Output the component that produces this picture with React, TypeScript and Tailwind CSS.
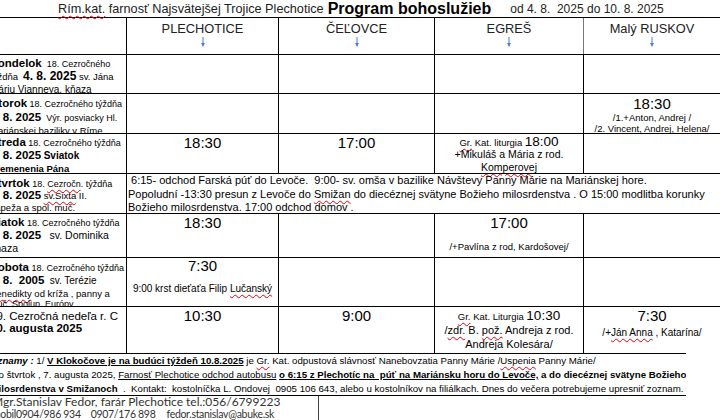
import type { ReactNode } from 'react'

const COLS = 'grid grid-cols-[126px_152px_156px_149px_1fr]'

// red spell-check squiggle
function W({ children }: { children: ReactNode }) {
  return <span className="underline decoration-wavy decoration-red-600 decoration-1 underline-offset-2">{children}</span>
}

function Arrow() {
  return (
    <svg width="6" height="10" viewBox="0 0 6 10" className="mx-auto mt-[1px] block">
      <line x1="3" y1="0" x2="3" y2="7" stroke="#4a7fd0" strokeWidth="1" />
      <polygon points="1,6 5,6 3,10" fill="#4a7fd0" />
    </svg>
  )
}

// one text line with a fixed height, so mixed font sizes don't push the rows apart
function Ln({ children, h = 'h-[13px]', className = '' }: { children: ReactNode; h?: string; className?: string }) {
  return <div className={`${h} leading-[13px] whitespace-nowrap ${className}`}>{children}</div>
}

// first column is cut off at the left edge of the page
function DayCell({ children }: { children: ReactNode }) {
  return (
    <div className="overflow-hidden pt-[2px]">
      <div className="-ml-[10px] text-[9px] text-black">{children}</div>
    </div>
  )
}

function Cell({ children, className = '' }: { children?: ReactNode; className?: string }) {
  return <div className={`border-l border-black text-center text-[9px] ${className}`}>{children}</div>
}

function Time({ t }: { t: string }) {
  return <div className="h-[18px] text-[15px] leading-[18px]">{t}</div>
}

const HEADS = ['PLECHOTICE', 'ČEĽOVCE', 'EGREŠ', 'Malý RUSKOV']

export default function App() {
  return (
    <div className="w-[720px] h-[420px] overflow-hidden bg-white text-black font-['Liberation_Sans',Arial,sans-serif]">
      {/* title */}
      <div className="h-[17px] flex items-end whitespace-nowrap">
        <span className="ml-[58px] text-[12.7px] leading-[15px] text-[#222]">
          <W>Rím.kat.</W> farnosť Najsvätejšej Trojice Plechotice
        </span>
        <span className="ml-[4px] text-[16px] leading-[17px] font-bold">Program bohoslužieb</span>
        <span className="ml-[19px] text-[12px] leading-[15px] text-[#222]">od 4. 8.&nbsp; 2025 do 10. 8. 2025</span>
      </div>

      {/* table */}
      <div className="border-t border-black">
        <div className={`${COLS} h-[37px] border-b border-black`}>
          <div />
          {HEADS.map((h, i) => (
            <div key={h} className={`border-l ${i === 3 ? 'border-[#777]' : 'border-black'} text-center pt-[3px]`}>
              <div className="text-[12.8px] leading-[15px] text-[#222]">{h}</div>
              <Arrow />
            </div>
          ))}
        </div>

        {/* Pondelok */}
        <div className={`${COLS} h-[39px] border-b border-black`}>
          <DayCell>
            <Ln>
              <b className="text-[11.5px]">Pondelok</b>&nbsp; 18. Cezročného
            </Ln>
            <Ln>
              <span className="text-[9.5px]">týždňa</span>&nbsp; <b className="text-[12px]">4. 8. 2025</b>{' '}
              <span className="text-[9.5px]">sv. Jána</span>
            </Ln>
            <Ln className="text-[10px]">
              Máriu <W>Vianneya</W>, kňaza
            </Ln>
          </DayCell>
          <Cell />
          <Cell />
          <Cell />
          <Cell className="border-[#777]" />
        </div>

        {/* Utorok */}
        <div className={`${COLS} h-[40px] border-b border-black`}>
          <DayCell>
            <Ln h="h-[14px]" className="mt-[1px]">
              <b className="text-[11.5px]">Utorok</b> 18. Cezročného týždňa
            </Ln>
            <Ln>
              <b className="text-[11.5px]">5. 8. 2025</b> <span className="text-[9px]">&nbsp;Výr. posviacky Hl.</span>
            </Ln>
            <Ln className="text-[9.5px]">Mariánskej baziliky v Ríme</Ln>
          </DayCell>
          <Cell />
          <Cell />
          <Cell />
          <Cell className="border-[#777] pt-[1px]">
            <div className="h-[17px] text-[15px] leading-[17px]">18:30</div>
            <div className="h-[11px] text-[9.5px] leading-[11px]">/1.+Anton, Andrej /</div>
            <div className="h-[11px] text-[9.5px] leading-[11px]">/2. Vincent, Andrej, Helena/</div>
          </Cell>
        </div>

        {/* Streda */}
        <div className={`${COLS} h-[40px] border-b border-black`}>
          <DayCell>
            <Ln>
              <b className="text-[11.5px]">Streda</b> 18. Cezročného týždňa
            </Ln>
            <Ln>
              <b className="text-[11.5px]">6. 8. 2025</b> <b className="text-[10px]">Sviatok</b>
            </Ln>
            <Ln className="text-[9.5px] font-bold">Premenenia Pána</Ln>
          </DayCell>
          <Cell>
            <Time t="18:30" />
          </Cell>
          <Cell>
            <Time t="17:00" />
          </Cell>
          <Cell className="pt-[1px]">
            <div className="h-[13px] leading-[13px] whitespace-nowrap">
              <span className="text-[9.5px]">
                <W>Gr.</W> Kat. liturgia
              </span>{' '}
              <span className="text-[13.5px]">18:00</span>
            </div>
            <div className="h-[12.5px] text-[10.5px] leading-[12.5px]">+Mikuláš a Mária z rod.</div>
            <div className="h-[12.5px] text-[10.5px] leading-[12.5px]">
              <W>Komperovej</W>
            </div>
          </Cell>
          <Cell className="border-[#777]" />
        </div>

        {/* Štvrtok */}
        <div className={`${COLS} h-[40px] border-b border-black`}>
          <DayCell>
            <Ln h="h-[12px]" className="mt-[1px]">
              <b className="text-[11.5px]">Štvrtok</b> 18. <W>Cezročn</W>. týždňa
            </Ln>
            <Ln h="h-[12px]">
              <b className="text-[11.5px]">7. 8. 2025</b>{' '}
              <span className="text-[9.5px]">
                <W>sv.Sixta</W> II.
              </span>
            </Ln>
            <Ln className="text-[9.5px]">pápeža a spol. muč.</Ln>
          </DayCell>
          <div className="col-span-4 border-l border-black pl-[1px] text-[11px] leading-[13.5px] whitespace-nowrap overflow-hidden">
            <div>&nbsp;6:15- odchod Farská púť do Levoče.&nbsp; 9:00- sv. omša v bazilike Návštevy Panny Márie na Mariánskej hore.</div>
            <div>
              Popoludní -13:30 presun z Levoče do <W>Smižan</W> do diecéznej svätyne Božieho milosrdenstva . O 15:00 modlitba korunky
            </div>
            <div>Božieho milosrdenstva. 17:00 odchod domov .</div>
          </div>
        </div>

        {/* Piatok */}
        <div className={`${COLS} h-[44px] border-b border-black`}>
          <DayCell>
            <Ln>
              <b className="text-[11.5px]">Piatok</b> 18. Cezročného týždňa
            </Ln>
            <Ln>
              <b className="text-[11.5px]">8. 8. 2025</b> <span className="text-[10.5px]">&nbsp; sv. Dominika</span>
            </Ln>
            <Ln className="text-[10.5px]">kňaza</Ln>
          </DayCell>
          <Cell>
            <Time t="18:30" />
          </Cell>
          <Cell />
          <Cell>
            <Time t="17:00" />
            <div className="h-[11px] text-[9.5px] leading-[11px] mt-[9px]">/+Pavlína z rod, Kardošovej/</div>
          </Cell>
          <Cell className="border-[#777]" />
        </div>

        {/* Sobota */}
        <div className={`${COLS} h-[49px] border-b border-black`}>
          <DayCell>
            <Ln className="mt-[1px]">
              <b className="text-[11.5px]">Sobota</b> 18. Cezročného týždňa
            </Ln>
            <Ln>
              <b className="text-[11.5px]">9. 8.&nbsp; 2005</b> <span className="text-[10px]">&nbsp;sv. Terézie</span>
            </Ln>
            <Ln h="h-[11px]" className="text-[9.5px]">
              <W>Benedikty</W> od kríža , panny a
            </Ln>
            <Ln h="h-[10px]" className="text-[9px]">
              muč. <W>Spolup.</W> Európy
            </Ln>
          </DayCell>
          <Cell>
            <div className="h-[16px] text-[15px] leading-[16px]">7:30</div>
            <div className="h-[12px] text-[10px] leading-[12px] mt-[9px]">
              9:00 krst dieťaťa Filip <W>Lučanský</W>
            </div>
          </Cell>
          <Cell />
          <Cell />
          <Cell className="border-[#777]" />
        </div>

        {/* Nedeľa */}
        <div className={`${COLS} h-[46px]`}>
          <DayCell>
            <Ln h="h-[12px]" className="text-[11.5px] mt-[1px]">
              19. Cezročná nedeľa r. C
            </Ln>
            <Ln h="h-[13px]" className="text-[11.5px] font-bold">
              10. augusta 2025
            </Ln>
          </DayCell>
          <Cell>
            <Time t="10:30" />
          </Cell>
          <Cell>
            <Time t="9:00" />
          </Cell>
          <Cell className="pt-[1px]">
            <div className="h-[15px] leading-[15px] whitespace-nowrap">
              <span className="text-[9.5px]">
                <W>Gr.</W> Kat. Liturgia
              </span>{' '}
              <span className="text-[13.5px]">10:30</span>
            </div>
            <div className="h-[14px] text-[11px] leading-[14px]">
              /<W>zdr.</W> B. <W>pož.</W> Andreja z rod.
            </div>
            <div className="h-[14px] text-[11px] leading-[14px]">Andreja Kolesára/</div>
          </Cell>
          <Cell className="border-[#777]">
            <Time t="7:30" />
            <div className="h-[12px] text-[10px] leading-[12px] mt-[2px]">
              /+<W>Ján Anna</W> , Katarína/
            </div>
          </Cell>
        </div>
      </div>

      {/* notes */}
      <div className="w-[686px] h-[43px] border-t border-b border-black overflow-hidden">
        <div className="-ml-[10px] whitespace-nowrap text-[9.7px] leading-[14px]">
          <div>
            <b className="italic">Oznamy :</b> 1/ <b className="underline">V Klokočove je na budúci týždeň 10.8.2025</b> je <W>Gr.</W> Kat.
            odpustová slávnosť Nanebovzatia Panny Márie /<W>Uspenia</W> Panny Márie/
          </div>
          <div>
            &nbsp;Vo štvrtok , 7. augusta 2025, <span className="underline">Farnosť Plechotice odchod autobusu</span>{' '}
            <b className="underline">o 6:15 z Plechotíc na&nbsp; púť na Mariánsku horu do Levoče,</b>
            <b> a do diecéznej svätyne Božieho</b>
          </div>
          <div>
            <b>milosrdenstva v Smižanoch</b>&nbsp; .&nbsp; Kontakt:&nbsp; kostolníčka L. <W>Ondovej</W>&nbsp; 0905 106 643, alebo u
            kostolníkov na filiálkach. Dnes do večera potrebujeme upresniť zoznam.
          </div>
        </div>
      </div>

      {/* signature */}
      <div className="w-[319px] h-[25px] border-r border-[#444] overflow-hidden">
        <div className="-ml-[8px] -mt-[1px] whitespace-nowrap font-['Lato',sans-serif] leading-[13px] text-[#333]">
          <div className="text-[12px]">Mgr.Stanislav Fedor, farár Plechotice tel.:056/6799223</div>
          <div className="text-[10.5px] tracking-[-0.3px]">
            mobil0904/986 934<span className="ml-[10px]">0907/176 898</span>
            <span className="ml-[11px]">fedor.stanislav@abuke.sk</span>
          </div>
        </div>
      </div>
    </div>
  )
}
